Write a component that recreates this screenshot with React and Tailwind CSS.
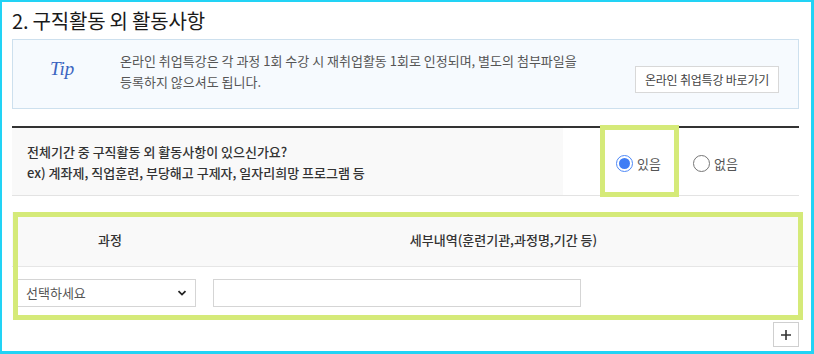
import React from "react";

const font = { fontFamily: '"Noto Sans CJK KR", "Noto Sans", sans-serif' };

function Radio({ checked, label }) {
  return (
    <div className="flex items-center">
      {checked ? (
        <div className="w-[17px] h-[17px] rounded-full border-[1.5px] border-[#4d88f7] flex items-center justify-center bg-white">
          <div className="w-[11px] h-[11px] rounded-full bg-[#3f7df5]" />
        </div>
      ) : (
        <div className="w-[17px] h-[17px] rounded-full border border-[#767676] bg-white" />
      )}
      <span className="ml-[4px] text-[13px] text-[#555] leading-none">{label}</span>
    </div>
  );
}

export default function App() {
  return (
    <div
      className="w-[814px] h-[354px] bg-white border-[#22d3f5] border-t-2 border-l-2 border-r-[3px] border-b-[3px] overflow-hidden"
      style={font}
    >
      <div className="pl-[10px] pr-[12px]">
        {/* Title */}
        <div className="h-[37px] flex items-center text-[20px] font-normal text-[#1a1a1a] tracking-[-0.2px]">
          2. 구직활동 외 활동사항
        </div>

        {/* Tip box */}
        <div className="h-[70px] border border-[#cde0ee] bg-[#f6fafe] flex">
          <div className="w-[107px] pl-[37px] pt-[15px]">
            <span
              className="text-[19px] italic text-[#3b64c0]"
              style={{ fontFamily: '"Liberation Serif", serif' }}
            >
              Tip
            </span>
          </div>
          <div className="pt-[10px] text-[13px] leading-[21px] text-[#555] w-[514px]">
            <div>온라인 취업특강은 각 과정 1회 수강 시 재취업활동 1회로 인정되며, 별도의 첨부파일을</div>
            <div>등록하지 않으셔도 됩니다.</div>
          </div>
          <div className="ml-auto mr-[19px] mt-[26px]">
            <div className="h-[27px] w-[144px] border border-[#d8d8d8] bg-white flex items-center justify-center text-[12px] tracking-[-0.2px] text-[#444]">
              온라인 취업특강 바로가기
            </div>
          </div>
        </div>

        <div className="h-[17px]" />

        {/* Question row */}
        <div className="relative h-[70px] border-t-2 border-[#333] border-b border-b-[#e3e3e3] flex">
          <div className="w-[551px] bg-[#f9f9f9] pl-[15px] flex flex-col justify-center text-[13px] leading-[21px] font-medium text-[#333]">
            <div>전체기간 중 구직활동 외 활동사항이 있으신가요?</div>
            <div>ex) 계좌제, 직업훈련, 부당해고 구제자, 일자리희망 프로그램 등</div>
          </div>
          <div className="flex items-center pl-[53px] gap-[32px] pt-[3px]">
            <Radio checked label="있음" />
            <Radio label="없음" />
          </div>
          <div className="absolute left-[588px] top-[-3px] w-[79px] h-[72px] border-[5px] border-[#d5ea79]" />
        </div>

        <div className="h-[16px]" />

        {/* Table */}
        <div className="relative">
          <div className="h-[55px] bg-[#f9f9f9] border-b border-[#e6e6e6] flex items-center text-[13px] font-medium text-[#333]">
            <div className="w-[196px] text-center pt-[2px]">과정</div>
            <div className="flex-1 text-center pt-[2px]">세부내역(훈련기관,과정명,기간 등)</div>
          </div>
          <div className="h-[53px] flex items-start pt-[12px] pl-[5px]">
            <div className="w-[179px] h-[28px] border border-[#d5d5d5] bg-white flex items-center pl-[8px] pr-[8px] text-[13px] text-[#555]">
              <span>선택하세요</span>
              <svg className="ml-auto" width="10" height="8" viewBox="0 0 10 8">
                <path d="M1.5 2.2 L5 5.6 L8.5 2.2" fill="none" stroke="#222" strokeWidth="1.8" />
              </svg>
            </div>
            <div className="ml-[17px] w-[368px] h-[28px] border border-[#d5d5d5] bg-white" />
          </div>
          <div className="absolute left-[1px] right-[-4px] top-0 bottom-0 border-[5px] border-[#d5ea79]" />
        </div>

        {/* Plus button */}
        <div className="flex justify-end mt-[2px]">
          <div className="w-[26px] h-[25px] border border-[#cfcfcf] bg-white flex items-center justify-center">
            <svg width="12" height="12" viewBox="0 0 12 12">
              <path d="M6 1 V11 M1 6 H11" stroke="#333" strokeWidth="1.6" />
            </svg>
          </div>
        </div>
      </div>
    </div>
  );
}
